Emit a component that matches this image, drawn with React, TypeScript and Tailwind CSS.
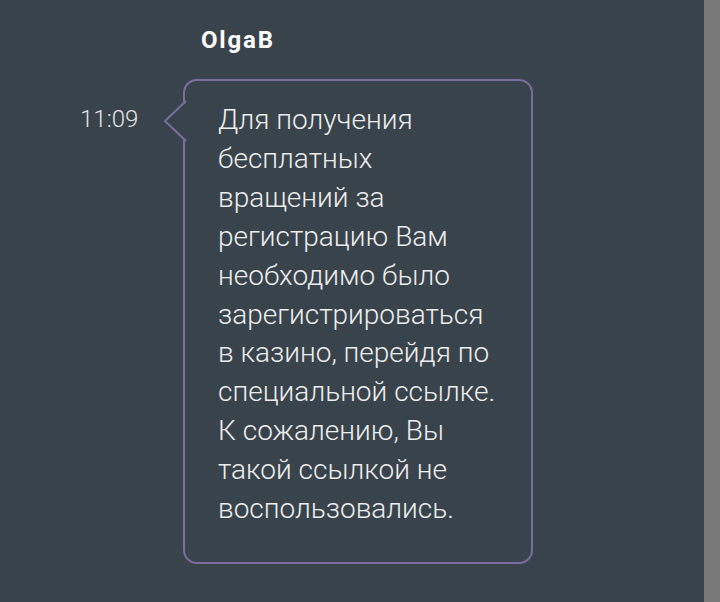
export default function App() {
  return (
    <div className="flex h-[602px] w-[720px] bg-[#39434c]" style={{ fontFamily: 'Roboto, "Liberation Sans", sans-serif' }}>
      <div className="flex-1">
        <div className="pl-[201px] pt-[26px] text-[24px] font-bold leading-[28px] tracking-[1.8px] text-white">OlgaB</div>
        <div className="mt-[25px] flex">
          <div className="w-[139px] pl-[80px] pt-[29px] text-[24px] font-light leading-[22px] text-[#e4e4e4]">11:09</div>
          <div className="relative ml-[44px] w-[350px] rounded-[14px] border-2 border-[#7b6d9f] pb-[33px] pl-[33px] pr-[6px] pt-[20px]">
            <svg className="absolute left-[-22px] top-[19px]" width="24" height="44" viewBox="0 0 24 44">
              <path d="M23 1 L2 21 L23 41" fill="#39434c" stroke="#7b6d9f" strokeWidth="2" strokeLinejoin="round" />
              <rect x="22" y="3" width="3" height="36" fill="#39434c" />
            </svg>
            <p className="whitespace-nowrap text-[28px] font-light leading-[38.9px] text-[#ededed]">
              Для получения<br />
              бесплатных<br />
              вращений за<br />
              регистрацию Вам<br />
              необходимо было<br />
              зарегистрироваться<br />
              в казино, перейдя по<br />
              специальной ссылке.<br />
              К сожалению, Вы<br />
              такой ссылкой не<br />
              воспользовались.
            </p>
          </div>
        </div>
      </div>
      <div className="w-[16px] bg-[#787878]" />
    </div>
  )
}
